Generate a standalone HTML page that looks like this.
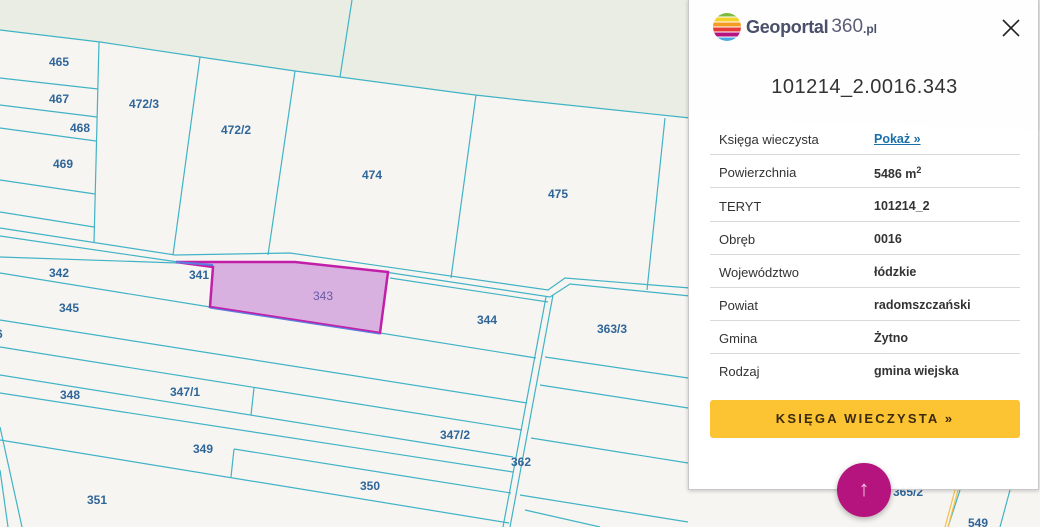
<!DOCTYPE html>
<html><head><meta charset="utf-8"><style>
*{margin:0;padding:0;box-sizing:border-box}
body{width:1040px;height:527px;overflow:hidden;background:#f7f5f1;font-family:"Liberation Sans",sans-serif;position:relative}
svg.map{position:absolute;left:0;top:0}
.lbl{font:bold 12px "Liberation Sans",sans-serif;fill:#2f6699}
#panel{position:absolute;left:688px;top:-1px;width:351px;height:491px;background:rgba(255,255,255,0.94);border:1px solid #c9c9c9;box-shadow:0 1px 4px rgba(0,0,0,.2)}
.logo{position:absolute;left:23px;top:12px;height:30px;display:flex;align-items:center}
.logo .t{font:bold 18px "Liberation Sans",sans-serif;color:#4a4f6a;margin-left:4px;letter-spacing:-0.3px}
.logo .n{font:19px "Liberation Sans",sans-serif;color:#5a5f78;margin-left:3px}
.logo .pl{font:bold 12px "Liberation Sans",sans-serif;color:#4a4f6a;margin-top:4px}
.close{position:absolute;left:312px;top:18px;width:20px;height:20px}
.title{position:absolute;left:0;width:351px;top:76px;text-align:center;font:20px "Liberation Sans",sans-serif;color:#333;letter-spacing:0.5px}
.row{position:absolute;left:21px;width:310px;height:33px;border-bottom:1px solid #d9d9d9;font-size:13px;color:#333}
.row .k{position:absolute;left:9px;top:10px}
.row .v{position:absolute;left:164px;top:10px;font-weight:bold;font-size:12.5px}
.btn{position:absolute;left:21px;top:400px;width:310px;height:38px;background:#fcc333;border-radius:3px;text-align:center;font:bold 13px "Liberation Sans",sans-serif;line-height:38px;letter-spacing:2.2px;color:#3a2a10}
.fab{position:absolute;left:837px;top:463px;width:54px;height:54px;border-radius:50%;background:#b5137e;box-shadow:0 2px 6px rgba(0,0,0,.3);color:#f6c6e6;text-align:center;line-height:52px;font-size:22px}
</style></head><body>
<svg class="map" width="1040" height="527" viewBox="0 0 1040 527">
<polygon points="0,0 1040,0 1040,130 690,118 520,100 475,95 340,77 295,71 200,57 100,42 0,30" fill="#e9ede4"/>
<g stroke="#41b3c6" stroke-width="1.2" fill="none">
<polyline points="0,30 100,42 200,57 295,71 340,77 475,95 520,100 690,118"/>
<line x1="352" y1="0" x2="340" y2="77"/>
<line x1="99" y1="42" x2="94" y2="243"/>
<line x1="200" y1="57" x2="173" y2="255"/>
<line x1="295" y1="71" x2="268" y2="255"/>
<line x1="476" y1="95" x2="451" y2="278"/>
<line x1="665" y1="118" x2="647" y2="290"/>
<line x1="0" y1="78" x2="98" y2="89"/>
<line x1="0" y1="105" x2="97" y2="117"/>
<line x1="0" y1="128" x2="96" y2="141"/>
<line x1="0" y1="180" x2="95" y2="194"/>
<line x1="0" y1="212" x2="94" y2="227"/>
<polyline points="0,228 175,255 290,253 548,290 565,278 690,288"/>
<polyline points="0,236 178,262"/>
<polyline points="0,257 178,263"/>
<polyline points="385,272 550,297 570,284 690,296"/>
<polyline points="390,278 548,302"/>
<polyline points="0,273 210,307 380,333 536,358"/>
<line x1="0" y1="320" x2="527" y2="403"/>
<line x1="0" y1="347" x2="522" y2="430"/>
<line x1="0" y1="375" x2="513" y2="457"/>
<line x1="254" y1="388" x2="251" y2="415"/>
<line x1="0" y1="393" x2="513" y2="472"/>
<line x1="0" y1="440" x2="509" y2="523"/>
<line x1="234" y1="449" x2="511" y2="493"/>
<line x1="234" y1="449" x2="231" y2="477"/>
<line x1="0" y1="427" x2="22" y2="527"/>
<line x1="0" y1="470" x2="8" y2="527"/>
<line x1="553" y1="295" x2="510" y2="527"/>
<line x1="546" y1="297" x2="503" y2="527"/>
<line x1="545" y1="357" x2="688" y2="378"/>
<line x1="540" y1="385" x2="688" y2="408"/>
<line x1="531" y1="438" x2="688" y2="463"/>
<line x1="520" y1="495" x2="688" y2="522"/>
<line x1="525" y1="510" x2="600" y2="527"/>
<line x1="960" y1="490" x2="948" y2="527"/>
<line x1="1010" y1="490" x2="1000" y2="527"/>
</g>
<line x1="955" y1="490" x2="945" y2="527" stroke="#f2c14e" stroke-width="1.2"/>
<line x1="958" y1="490" x2="948" y2="527" stroke="#f2c14e" stroke-width="1.2"/>
<polygon points="176,262 295,262 388,272 380,333 210,307 213,267" fill="#d8b1e0" stroke="#c21fa9" stroke-width="2.5"/>
<polyline points="176,262 213,265" stroke="#5a7fe0" stroke-width="2" fill="none"/>
<polyline points="210,307 380,333" stroke="#5a7fe0" stroke-width="1.2" fill="none" transform="translate(0,1)"/>
<text class="lbl" x="49" y="66">465</text>
<text class="lbl" x="49" y="103">467</text>
<text class="lbl" x="70" y="132">468</text>
<text class="lbl" x="53" y="168">469</text>
<text class="lbl" x="129" y="108">472/3</text>
<text class="lbl" x="221" y="134">472/2</text>
<text class="lbl" x="362" y="179">474</text>
<text class="lbl" x="548" y="198">475</text>
<text class="lbl" x="49" y="277">342</text>
<text class="lbl" x="189" y="279">341</text>
<text class="lbl" x="313" y="300" style="fill:#6a5aa8;font-weight:normal">343</text>
<text class="lbl" x="59" y="312">345</text>
<text class="lbl" x="-4" y="338">6</text>
<text class="lbl" x="477" y="324">344</text>
<text class="lbl" x="597" y="333">363/3</text>
<text class="lbl" x="60" y="399">348</text>
<text class="lbl" x="170" y="396">347/1</text>
<text class="lbl" x="440" y="439">347/2</text>
<text class="lbl" x="193" y="453">349</text>
<text class="lbl" x="511" y="466">362</text>
<text class="lbl" x="360" y="490">350</text>
<text class="lbl" x="87" y="504">351</text>
<text class="lbl" x="893" y="496">365/2</text>
<text class="lbl" x="968" y="527">549</text>
</svg>
<div id="panel">
 <div class="logo">
  <svg width="30" height="30" viewBox="0 0 30 30">
   <defs><clipPath id="c"><circle cx="15" cy="15" r="14"/></clipPath></defs>
   <g clip-path="url(#c)">
    <rect x="0" y="0" width="30" height="5" fill="#7dbb3f"/>
    <rect x="0" y="5" width="30" height="5" fill="#f4d12a"/>
    <rect x="0" y="10" width="30" height="5" fill="#f59a23"/>
    <rect x="0" y="15" width="30" height="5" fill="#e63a3a"/>
    <rect x="0" y="20" width="30" height="5" fill="#b5137e"/>
    <rect x="0" y="25" width="30" height="5" fill="#4aa8e0"/>
    <g stroke="#fff" stroke-width="1"><line x1="0" y1="5" x2="30" y2="5"/><line x1="0" y1="10" x2="30" y2="10"/><line x1="0" y1="15" x2="30" y2="15"/><line x1="0" y1="20" x2="30" y2="20"/><line x1="0" y1="25" x2="30" y2="25"/></g>
   </g>
  </svg>
  <span class="t">Geoportal</span><span class="n">360</span><span class="pl">.pl</span>
 </div>
 <svg class="close" viewBox="0 0 20 20"><path d="M2 2L18 18M18 2L2 18" stroke="#222" stroke-width="1.6"/></svg>
 <div class="title">101214_2.0016.343</div>
 <div class="row" style="top:122px"><span class="k">Księga wieczysta</span><span class="v" style="color:#1a6fa8;text-decoration:underline">Pokaż »</span></div>
 <div class="row" style="top:155px"><span class="k">Powierzchnia</span><span class="v">5486 m<sup style="font-size:9px">2</sup></span></div>
 <div class="row" style="top:189px"><span class="k">TERYT</span><span class="v">101214_2</span></div>
 <div class="row" style="top:222px"><span class="k">Obręb</span><span class="v">0016</span></div>
 <div class="row" style="top:255px"><span class="k">Województwo</span><span class="v">łódzkie</span></div>
 <div class="row" style="top:288px"><span class="k">Powiat</span><span class="v">radomszczański</span></div>
 <div class="row" style="top:321px"><span class="k">Gmina</span><span class="v">Żytno</span></div>
 <div class="row" style="top:354px;border-bottom:none"><span class="k">Rodzaj</span><span class="v">gmina wiejska</span></div>
 <div class="btn">KSIĘGA WIECZYSTA »</div>
</div>
<div class="fab">↑</div>
</body></html>
